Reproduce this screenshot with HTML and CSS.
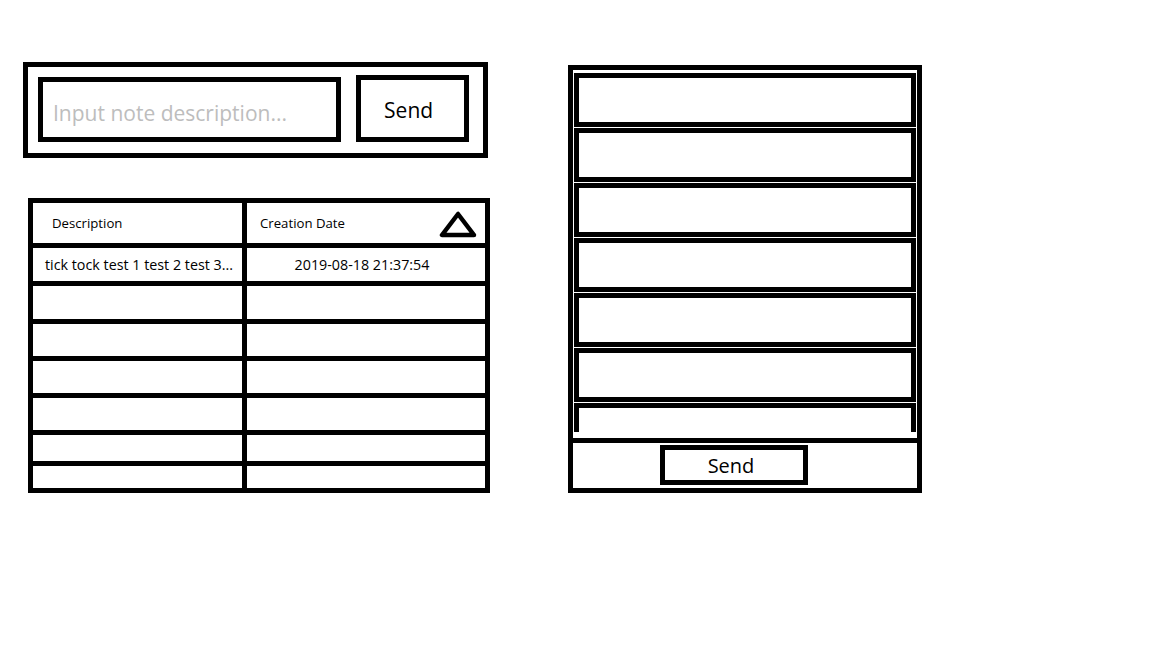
FILE: index.html
```html
<!DOCTYPE html>
<html>
<head>
<meta charset="utf-8">
<link rel="stylesheet" href="styles.css">
</head>
<body>
<div class="page">
	<div class="left-col">
		<!-- new note form -->
		<div class="note-form">
			<input class="note-input" type="text" placeholder="Input note description...">
			<button class="send-btn">Send</button>
		</div>

		<!-- notes table -->
		<div class="notes-table">
			<div class="cell head">Description</div>
			<div class="cell head head-date">
				<span>Creation Date</span>
				<svg class="sort-icon" width="40" height="27" viewBox="0 0 40 27">
					<polygon points="19,3 3,24 35,24" fill="none" stroke="#000" stroke-width="4.5" stroke-linejoin="round"/>
				</svg>
			</div>
			<div class="cell desc">tick tock test 1 test 2 test 3...</div>
			<div class="cell date">2019-08-18 21:37:54</div>
			<div class="cell"></div><div class="cell"></div>
			<div class="cell"></div><div class="cell"></div>
			<div class="cell"></div><div class="cell"></div>
			<div class="cell"></div><div class="cell"></div>
			<div class="cell"></div><div class="cell"></div>
			<div class="cell"></div><div class="cell"></div>
		</div>
	</div>

	<!-- message list panel -->
	<div class="panel">
		<div class="item-list">
			<div class="item"></div>
			<div class="item"></div>
			<div class="item"></div>
			<div class="item"></div>
			<div class="item"></div>
			<div class="item"></div>
			<div class="item"></div>
		</div>
		<div class="panel-footer">
			<button class="panel-send">Send</button>
		</div>
	</div>
</div>
</body>
</html>
```

FILE: styles.css
```css
body {
	margin: 0;
	background: #fff;
	font-family: "Open Sans", "Noto Sans", sans-serif;
	color: #000;
}
.page {
	display: flex;
	align-items: flex-start;
	padding: 62px 0 0 23px;
}
.left-col {
	width: 467px;
}

.note-form {
	box-sizing: border-box;
	width: 465px;
	height: 96px;
	border: 5px solid #000;
	display: flex;
	align-items: flex-end;
	padding: 0 14px 11px 10px;
	gap: 15px;
}
.note-input {
	box-sizing: border-box;
	width: 304px;
	height: 65px;
	border: 5px solid #000;
	outline: none;
	padding: 6px 0 0 10px;
	font-family: "Open Sans", sans-serif;
	font-size: 21px;
	color: #000;
}
.note-input::placeholder {
	color: #bdbdbd;
}
.send-btn {
	box-sizing: border-box;
	width: 113px;
	height: 67px;
	border: 5px solid #000;
	background: #fff;
	font-family: "Open Sans", sans-serif;
	font-size: 21px;
	padding: 3px 8px 0 0;
}

.notes-table {
	box-sizing: border-box;
	width: 462px;
	margin: 40px 0 0 5px;
	background: #000;
	padding: 5px;
	display: grid;
	grid-template-columns: 209px 238px;
	grid-template-rows: 40px 33px 33px 32px 32px 32px 26px 22px;
	gap: 5px;
}
.cell {
	background: #fff;
	display: flex;
	align-items: center;
	font-size: 14.3px;
}
.head {
	font-size: 13.2px;
	padding-left: 19px;
}
.head-date {
	padding-left: 13px;
	padding-right: 6px;
	justify-content: space-between;
}
.sort-icon {
	margin-top: 3px;
}
.desc {
	padding-left: 12px;
}
.date {
	justify-content: center;
	padding-right: 8px;
}

.panel {
	box-sizing: border-box;
	width: 354px;
	height: 428px;
	margin: 3px 0 0 78px;
	border: 5px solid #000;
	display: flex;
	flex-direction: column;
}
.item-list {
	height: 359px;
	overflow: hidden;
	padding: 3px 1px 0;
	margin-bottom: 6px;
}
.item {
	box-sizing: border-box;
	height: 54px;
	border: 5px solid #000;
	margin-bottom: 1px;
}
.panel-footer {
	flex: 1;
	border-top: 5px solid #000;
	padding: 2px 0 0 87px;
}
.panel-send {
	box-sizing: border-box;
	width: 148px;
	height: 40px;
	border: 5px solid #000;
	background: #fff;
	font-family: "Open Sans", sans-serif;
	font-size: 20px;
	padding: 0 6px 0 0;
	display: block;
}
```
